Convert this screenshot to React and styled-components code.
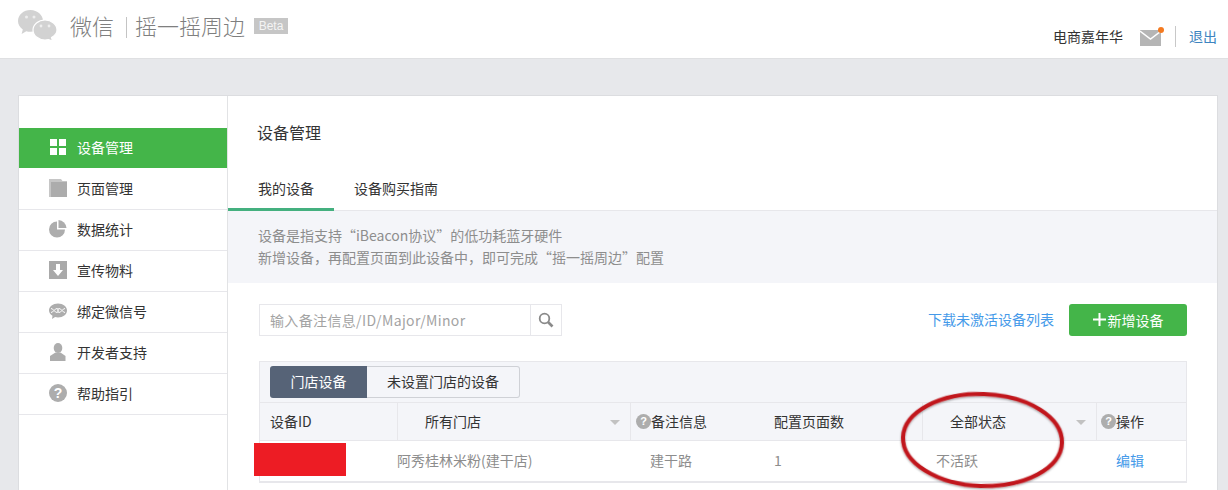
import React from "react";
import styled, { createGlobalStyle } from "styled-components";

const FONT = `"Noto Sans CJK SC", "Open Sans", "Liberation Sans", sans-serif`;

const GlobalStyle = createGlobalStyle`
  html, body {
    margin: 0;
    height: 490px;
    overflow: hidden;
    background: #e7e8eb;
    font-family: ${FONT};
    font-size: 14px;
    color: #333;
  }
  * { box-sizing: border-box; }
`;

const Page = styled.div`
  position: relative;
  width: 1228px;
  height: 490px;
  overflow: hidden;
`;

const Header = styled.header`
  height: 59px;
  background: #fff;
  border-bottom: 1px solid #dfe0e2;
  display: flex;
  justify-content: space-between;
  padding: 0 11px 0 18px;
`;

const Brand = styled.div`
  display: flex;
  align-items: flex-start;
  padding-top: 10px;
`;

const BrandName = styled.span`
  font-size: 22px;
  line-height: 30px;
  color: #7f7f7f;
  font-weight: 300;
  margin-left: ${(p) => p.$left}px;
  white-space: nowrap;
`;

const BrandLine = styled.i`
  width: 1px;
  height: 21px;
  margin: 7px 0 0 12px;
  background: #c4c4c4;
`;

const BetaTag = styled.span`
  width: 34px;
  height: 16px;
  margin: 8px 0 0 9px;
  background: #c6c6c6;
  color: #f4f4f4;
  font-family: "Liberation Sans", sans-serif;
  font-size: 12px;
  line-height: 16px;
  text-align: center;
`;

const Account = styled.div`
  display: flex;
  align-items: center;
  height: 21px;
  margin-top: 26px;
`;

const AccountName = styled.span`
  font-size: 14px;
  line-height: 21px;
  color: #333;
  white-space: nowrap;
`;

const MailWrap = styled.span`
  position: relative;
  display: block;
  width: 21px;
  height: 16px;
  margin: 2px 0 0 17px;
`;

const MailDot = styled.i`
  position: absolute;
  right: -3px;
  top: -3px;
  width: 6px;
  height: 6px;
  border-radius: 50%;
  background: #f47a20;
`;

const AccountLine = styled.i`
  width: 1px;
  height: 21px;
  margin: 0 13px 0 14px;
  background: #c8c8c8;
`;

const Logout = styled.a`
  color: #3d84c0;
  font-size: 14px;
  line-height: 21px;
`;

const Card = styled.div`
  display: flex;
  margin: 36px 10px 0 18px;
  height: 460px;
  background: #fff;
  border: 1px solid #dcdde0;
`;

const Side = styled.nav`
  width: 209px;
  flex: none;
  padding-top: 32px;
  border-right: 1px solid #e2e3e5;
`;

const NavRow = styled.div`
  display: flex;
  align-items: center;
  height: 41px;
  padding: 0 0 2px 30px;
  font-size: 14px;
  color: ${(p) => (p.$active ? "#fff" : "#333")};
  background: ${(p) => (p.$active ? "#44b549" : "#fff")};
  background-clip: padding-box;
  border-bottom: 1px solid ${(p) => (p.$active ? "transparent" : "#e7e7eb")};
  & > svg, & > span:first-child {
    flex: none;
    margin-right: 10px;
  }
`;

const Help = styled.span`
  display: inline-block;
  flex: none;
  width: ${(p) => p.$size}px;
  height: ${(p) => p.$size}px;
  margin-top: ${(p) => p.$drop || 0}px;
  border-radius: 50%;
  background: #adadad;
  color: #fff;
  font-family: "Liberation Sans", sans-serif;
  font-weight: 700;
  font-size: ${(p) => p.$size - 4}px;
  line-height: ${(p) => p.$size}px;
  text-align: center;
`;

const Main = styled.main`
  flex: 1;
  min-width: 0;
`;

const PageTitle = styled.h2`
  margin: 0;
  height: 74px;
  padding-left: 29px;
  font-size: 16px;
  font-weight: 400;
  line-height: 72px;
  color: #333;
`;

const Tabs = styled.div`
  display: flex;
  height: 41px;
  border-bottom: 1px solid #e7e7eb;
`;

const Tab = styled.a`
  height: 41px;
  padding: 0 20px 0 ${(p) => (p.$active ? 30 : 20)}px;
  font-size: 14px;
  line-height: 36px;
  color: #333;
  border-bottom: 3px solid ${(p) => (p.$active ? "#44b07f" : "transparent")};
`;

const Notice = styled.div`
  padding: 13px 30px 15px;
  background: #f4f5f9;
  color: #8d8d8d;
  font-size: 14px;
  line-height: 22px;
`;

const Content = styled.div`
  padding: 21px 30px 0 31px;
`;

const ActionBar = styled.div`
  display: flex;
  align-items: flex-start;
  height: 32px;
`;

const SearchBox = styled.div`
  display: flex;
  width: 303px;
  height: 32px;
  border: 1px solid #e7e7eb;
`;

const SearchInput = styled.input`
  width: 271px;
  height: 30px;
  padding: 0 10px;
  border: 0;
  border-right: 1px solid #e7e7eb;
  outline: 0;
  background: #fff;
  font-family: ${FONT};
  font-size: 14px;
  &::placeholder {
    color: #a3a3a3;
    opacity: 1;
    letter-spacing: 0.35px;
  }
`;

const SearchBtn = styled.span`
  flex: 1;
  display: flex;
  align-items: center;
  justify-content: center;
`;

const DownloadLink = styled.a`
  margin-left: auto;
  font-size: 14px;
  line-height: 30px;
  color: #459ae9;
  white-space: nowrap;
`;

const AddButton = styled.button`
  display: flex;
  align-items: center;
  justify-content: center;
  width: 118px;
  height: 32px;
  margin-left: 15px;
  padding: 0 0 1px;
  border: 0;
  border-radius: 3px;
  background: #44b549;
  color: #fff;
  font-family: ${FONT};
  font-size: 14px;
  & > svg {
    margin-right: 2px;
  }
`;

const Panel = styled.section`
  margin-top: 25px;
  border: 1px solid #e7e7eb;
`;

const Toolbar = styled.div`
  display: flex;
  height: 41px;
  padding: 4px 10px 0;
  background: #f4f5f9;
  border-bottom: 1px solid #e7e7eb;
`;

const Segment = styled.a`
  display: block;
  width: ${(p) => p.$width}px;
  height: 32px;
  font-size: 14px;
  text-align: center;
  color: ${(p) => (p.$active ? "#fff" : "#333")};
  background: ${(p) => (p.$active ? "#566377" : "#f4f5f9")};
  border: ${(p) => (p.$active ? "0" : "1px solid #cfd1d6")};
  border-left: 0;
  line-height: ${(p) => (p.$active ? 30 : 28)}px;
  border-radius: ${(p) => (p.$active ? "3px 0 0 3px" : "0 3px 3px 0")};
`;

const TableRow = styled.div`
  display: grid;
  grid-template-columns: 138px 233px 143px 149px 174px 1fr;
  height: ${(p) => (p.$head ? 38 : 41)}px;
  background: ${(p) => (p.$head ? "#f4f5f9" : "#fff")};
  border-bottom: 1px solid #e7e7eb;
`;

const HeadCell = styled.div`
  display: flex;
  align-items: center;
  position: relative;
  padding: 0 0 2px ${(p) => p.$pad || 0}px;
  font-size: 14px;
  color: #333;
  white-space: nowrap;
  border-right: ${(p) => (p.$line ? "1px solid #e7e7eb" : "0")};
`;

const Caret = styled.i`
  position: absolute;
  right: 10px;
  top: 17px;
  width: 0;
  height: 0;
  border: 5px solid transparent;
  border-top: 5px solid #c2c2c2;
  border-bottom: 0;
`;

const Cell = styled.div`
  display: flex;
  align-items: center;
  padding: 0 0 2px ${(p) => p.$pad || 0}px;
  margin-left: ${(p) => p.$shift || 0}px;
  font-size: 14px;
  color: ${(p) => (p.$link ? "#459ae9" : "#8d8d8d")};
  white-space: nowrap;
`;

const Redaction = styled.div`
  position: absolute;
  left: 254px;
  top: 443px;
  width: 92px;
  height: 33px;
  background: #ed1c24;
`;

const Circle = styled.svg`
  position: absolute;
  left: 890px;
  top: 380px;
  width: 190px;
  height: 110px;
  pointer-events: none;
`;

const Logo = () => (
  <svg width="40" height="31" viewBox="0 0 40 31">
    <path
      d="M12.500 0C5.600 0 0 4.900 0 11c0 3.500 1.900 6.500 4.800 8.500L3.600 24l4.700-2.800c1.300.4 2.700.6 4.200.6 6.900 0 12.500-4.800 12.500-10.800S19.400 0 12.500 0z"
      fill="#d2d2d2"
    />
    <path
      d="M39 20c0-5.500-5.300-10-12-10s-12 4.500-12 10 5.300 10 12 10c1.200 0 2.400-.1 3.500-.4l4 1.400-1-3.500c3.300-1.800 5.500-4.600 5.500-7.500z"
      fill="#d2d2d2"
      stroke="#fff"
      strokeWidth="1.200"
    />
    <circle cx="8.500" cy="7" r="1.500" fill="#eee" />
    <circle cx="16" cy="7" r="1.500" fill="#eee" />
    <circle cx="23" cy="16" r="1.400" fill="#eee" />
    <circle cx="31" cy="16" r="1.400" fill="#eee" />
  </svg>
);

const Mail = () => (
  <svg width="21" height="16" viewBox="0 0 21 16">
    <path d="M0 0h21v16H0z" fill="#b5b5b5" />
    <path d="M0 1l10.500 8L21 1" fill="none" stroke="#fff" strokeWidth="1.400" />
  </svg>
);

const GridIcon = () => (
  <svg width="18" height="18" viewBox="0 0 18 18">
    <path d="M1 1h7v7H1zM10 1h7v7h-7zM1 10h7v7H1zM10 10h7v7h-7z" fill="#fff" />
  </svg>
);

const FolderIcon = () => (
  <svg width="18" height="18" viewBox="0 0 18 18">
    <path d="M0 0h12l1.500 2H18v16H0z" fill="#c6c6c6" />
    <path d="M2 3h16v15H2z" fill="#acacac" />
  </svg>
);

const PieIcon = () => (
  <svg width="18" height="18" viewBox="0 0 18 18">
    <path d="M8 1.500V9.500h8A8 8 0 1 1 8 1.500z" fill="#adadad" />
    <path d="M9.500 0A8.500 8.500 0 0 1 17.500 8H9.500z" fill="#adadad" />
  </svg>
);

const DownloadIcon = () => (
  <svg width="18" height="18" viewBox="0 0 18 18">
    <path d="M0 0h18v18H0z" fill="#a9a9a9" />
    <path d="M7 3h4v6h3l-5 6-5-6h3z" fill="#fff" />
  </svg>
);

const ChatIcon = () => (
  <svg width="18" height="18" viewBox="0 0 18 18">
    <path d="M9 1.500c5 0 9 3 9 7s-4 7-9 7c-1 0-2-.1-2.900-.4L3 17l.5-3.300C1.400 12.400 0 10.600 0 8.500c0-4 4-7 9-7z" fill="#adadad" />
    <path d="M2 6.500c2.500 0 3.500 4 6 4 1 0 1-1 1-2s0-2 1-2c2.500 0 3.500 4 6 4M2 10.500c2.500 0 3.500-4 6-4 1 0 1 1 1 2s0 2 1 2c2.500 0 3.500-4 6-4" fill="none" stroke="#fff" strokeWidth="1" />
  </svg>
);

const UserIcon = () => (
  <svg width="18" height="18" viewBox="0 0 18 18">
    <ellipse cx="9" cy="5" rx="4.300" ry="5" fill="#adadad" />
    <path d="M6.500 9.500L1 13v5h15.500v-5l-5-3.500z" fill="#adadad" />
  </svg>
);

const SearchIcon = () => (
  <svg width="16" height="16" viewBox="0 0 16 16">
    <circle cx="6.500" cy="6.500" r="4.800" fill="none" stroke="#8a8a8a" strokeWidth="1.800" />
    <path d="M10 10l4.500 4.500" stroke="#8a8a8a" strokeWidth="2.600" />
  </svg>
);

const PlusIcon = () => (
  <svg width="13" height="13" viewBox="0 0 13 13">
    <path d="M0 5.500h13v2H0zM5.500 0h2v13h-2z" fill="#fff" />
  </svg>
);

const navItems = [
  { label: "设备管理", icon: <GridIcon />, active: true },
  { label: "页面管理", icon: <FolderIcon /> },
  { label: "数据统计", icon: <PieIcon /> },
  { label: "宣传物料", icon: <DownloadIcon /> },
  { label: "绑定微信号", icon: <ChatIcon /> },
  { label: "开发者支持", icon: <UserIcon /> },
  { label: "帮助指引", icon: <Help $size={18}>?</Help> },
];

function App() {
  return (
    <Page>
      <GlobalStyle />
      <Header>
        <Brand>
          <Logo />
          <BrandName $left={12}>微信</BrandName>
          <BrandLine />
          <BrandName $left={8}>摇一摇周边</BrandName>
          <BetaTag>Beta</BetaTag>
        </Brand>
        <Account>
          <AccountName>电商嘉年华</AccountName>
          <MailWrap>
            <Mail />
            <MailDot />
          </MailWrap>
          <AccountLine />
          <Logout>退出</Logout>
        </Account>
      </Header>

      <Card>
        <Side>
          {navItems.map((item) => (
            <NavRow key={item.label} $active={item.active}>
              {item.icon}
              <span>{item.label}</span>
            </NavRow>
          ))}
        </Side>
        <Main>
          <PageTitle>设备管理</PageTitle>
          <Tabs>
            <Tab $active>我的设备</Tab>
            <Tab>设备购买指南</Tab>
          </Tabs>
          <Notice>
            设备是指支持“iBeacon协议”的低功耗蓝牙硬件
            <br />
            新增设备，再配置页面到此设备中，即可完成“摇一摇周边”配置
          </Notice>
          <Content>
            <ActionBar>
              <SearchBox>
                <SearchInput placeholder="输入备注信息/ID/Major/Minor" />
                <SearchBtn>
                  <SearchIcon />
                </SearchBtn>
              </SearchBox>
              <DownloadLink>下载未激活设备列表</DownloadLink>
              <AddButton>
                <PlusIcon />
                新增设备
              </AddButton>
            </ActionBar>
            <Panel>
              <Toolbar>
                <Segment $active $width={97}>门店设备</Segment>
                <Segment $width={153}>未设置门店的设备</Segment>
              </Toolbar>
              <TableRow $head>
                <HeadCell $pad={10} $line>设备ID</HeadCell>
                <HeadCell $pad={27} $line>所有门店<Caret /></HeadCell>
                <HeadCell $pad={5}><Help $size={15} $drop={2}>?</Help>备注信息</HeadCell>
                <HeadCell $line>配置页面数</HeadCell>
                <HeadCell $pad={27} $line>全部状态<Caret /></HeadCell>
                <HeadCell $pad={4}><Help $size={15} $drop={2}>?</Help>操作</HeadCell>
              </TableRow>
              <TableRow>
                <Cell />
                <Cell $shift={-1}>阿秀桂林米粉(建干店)</Cell>
                <Cell $pad={19}>建干路</Cell>
                <Cell>1</Cell>
                <Cell $pad={13}>不活跃</Cell>
                <Cell $pad={19} $link>编辑</Cell>
              </TableRow>
            </Panel>
          </Content>
        </Main>
      </Card>

      <Redaction />
      <Circle viewBox="0 0 190 110">
        <defs>
          <filter id="ringShadow" x="-10%" y="-10%" width="120%" height="120%">
            <feDropShadow dx="0" dy="1" stdDeviation="1.200" floodColor="#000" floodOpacity="0.4" />
          </filter>
        </defs>
        <ellipse
          cx="92.500"
          cy="60"
          rx="79.500"
          ry="46"
          fill="none"
          stroke="#c1171d"
          strokeWidth="4"
          transform="rotate(2 92 60)"
          filter="url(#ringShadow)"
        />
      </Circle>
    </Page>
  );
}

export default App;
